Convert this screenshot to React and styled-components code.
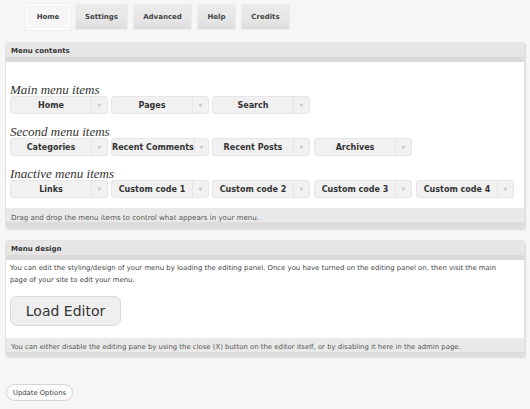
import React from "react";
import styled, { createGlobalStyle } from "styled-components";

const Global = createGlobalStyle`
  html, body { margin: 0; padding: 0; background: #f6f6f6; }
  body { font-family: "DejaVu Sans", Verdana, sans-serif; color: #333; }
`;

const Page = styled.div`
  padding: 4px 5px 0 5px;
  width: 520px;
`;

const Tabs = styled.div`
  display: flex;
  gap: 5px;
  padding-left: 21px;
  height: 26px;
`;

const Tab = styled.div`
  width: ${(p) => p.$w}px;
  height: 26px;
  box-sizing: border-box;
  display: flex;
  align-items: center;
  justify-content: center;
  font-size: 7px;
  font-weight: bold;
  color: #444;
  border-radius: 2px 2px 0 0;
  border: 1px solid ${(p) => (p.$active ? "#ffffff" : "#ececec")};
  background: ${(p) =>
    p.$active ? "#f6f6f6" : "linear-gradient(#ebebeb 0%, #e6e6e6 60%, #dcdcdc 100%)"};
  box-shadow: ${(p) => (p.$active ? "0 0 0 1px #ececec" : "none")};
`;

const Panel = styled.div`
  margin-top: ${(p) => p.$mt}px;
  border: 1px solid #e2e2e2;
  border-radius: 3px;
  background: #fff;
  box-shadow: 1px 1px 1px #dcdcdc;
  overflow: hidden;
`;

const PanelHead = styled.div`
  height: 19px;
  box-sizing: border-box;
  padding: 4px 5px 0;
  font-size: 7px;
  font-weight: bold;
  color: #333;
  background: linear-gradient(#e7e7e7 0, #e5e5e5 14px, #dadada 14px, #dadada 19px);
`;

const PanelBody = styled.div`
  padding: ${(p) => p.$pad};
  display: flex;
  flex-direction: column;
  align-items: flex-start;
`;

const PanelFoot = styled.div`
  height: ${(p) => p.$h}px;
  box-sizing: border-box;
  padding: 5px 5px 0;
  font-size: ${(p) => p.$fs}px;
  color: #555;
  white-space: nowrap;
  background: linear-gradient(#e9e9e9 0, #e9e9e9 14px, #dcdcdc 14px, #dcdcdc 100%);
`;

const GroupLabel = styled.div`
  font-family: "Liberation Serif", "Times New Roman", serif;
  font-style: italic;
  font-size: 13px;
  line-height: 13px;
  color: #333;
  height: 13px;
  margin-top: ${(p) => p.$mt}px;
`;

const ItemRow = styled.div`
  display: flex;
  gap: 3px;
`;

const Item = styled.div`
  width: 98px;
  height: 18px;
  box-sizing: border-box;
  margin-left: ${(p) => (p.$extra ? 1 : 0)}px;
  display: flex;
  border: 1px solid #e6e6e6;
  border-radius: 3px;
  background: #f1f1f1;
`;

const ItemLabel = styled.div`
  flex: 1;
  display: flex;
  align-items: center;
  justify-content: center;
  font-size: 8px;
  font-weight: bold;
  color: #333;
  white-space: nowrap;
`;

const ItemArrow = styled.div`
  width: 15px;
  border-left: 1px solid #e4e4e4;
  display: flex;
  align-items: center;
  justify-content: center;
  color: #c8c8c8;
  font-size: 5px;
`;

const Text = styled.p`
  margin: 0;
  max-width: 492px;
  font-size: 6.9px;
  line-height: 12px;
  color: #444;
`;

const BigButton = styled.div`
  margin-top: 10px;
  width: 111px;
  height: 30px;
  box-sizing: border-box;
  border: 1px solid #d8d8d8;
  border-radius: 7px;
  background: #efefef;
  display: flex;
  align-items: center;
  justify-content: center;
  font-size: 14px;
  color: #333;
`;

const UpdateButton = styled.div`
  margin: 27px 0 0 1px;
  width: 67px;
  height: 17px;
  box-sizing: border-box;
  border: 1px solid #d4d4d4;
  border-radius: 9px;
  background: #fbfbfb;
  display: flex;
  align-items: center;
  justify-content: center;
  font-size: 6.8px;
  color: #444;
`;

const MenuItem = ({ label, extra }) => (
  <Item $extra={extra}>
    <ItemLabel>{label}</ItemLabel>
    <ItemArrow>▼</ItemArrow>
  </Item>
);

const groups = [
  { label: "Main menu items", mt: 21, items: ["Home", "Pages", "Search"] },
  { label: "Second menu items", mt: 11, items: ["Categories", "Recent Comments", "Recent Posts", "Archives"] },
  { label: "Inactive menu items", mt: 11, items: ["Links", "Custom code 1", "Custom code 2", "Custom code 3", "Custom code 4"] },
];

export default function App() {
  return (
    <Page>
      <Global />
      <Tabs>
        <Tab $w={44} $active>Home</Tab>
        <Tab $w={53}>Settings</Tab>
        <Tab $w={59}>Advanced</Tab>
        <Tab $w={39}>Help</Tab>
        <Tab $w={49}>Credits</Tab>
      </Tabs>
      <Panel $mt={12}>
        <PanelHead>Menu contents</PanelHead>
        <PanelBody $pad="0 4px 10px">
          {groups.map((g) => (
            <React.Fragment key={g.label}>
              <GroupLabel $mt={g.mt}>{g.label}</GroupLabel>
              <ItemRow>
                {g.items.map((it, i) => (
                  <MenuItem key={it} label={it} extra={i >= 3} />
                ))}
              </ItemRow>
            </React.Fragment>
          ))}
        </PanelBody>
        <PanelFoot $h={20} $fs={7.1}>Drag and drop the menu items to control what appears in your menu.</PanelFoot>
      </Panel>
      <Panel $mt={11}>
        <PanelHead>Menu design</PanelHead>
        <PanelBody $pad="2px 4px 12px">
          <Text>
            You can edit the styling/design of your menu by loading the editing panel. Once you have turned on the editing panel on, then visit the main page of your site to edit your menu.
          </Text>
          <BigButton>Load Editor</BigButton>
        </PanelBody>
        <PanelFoot $h={18} $fs={6.9}>
          You can either disable the editing pane by using the close (X) button on the editor itself, or by disabling it here in the admin page.
        </PanelFoot>
      </Panel>
      <UpdateButton>Update Options</UpdateButton>
    </Page>
  );
}
